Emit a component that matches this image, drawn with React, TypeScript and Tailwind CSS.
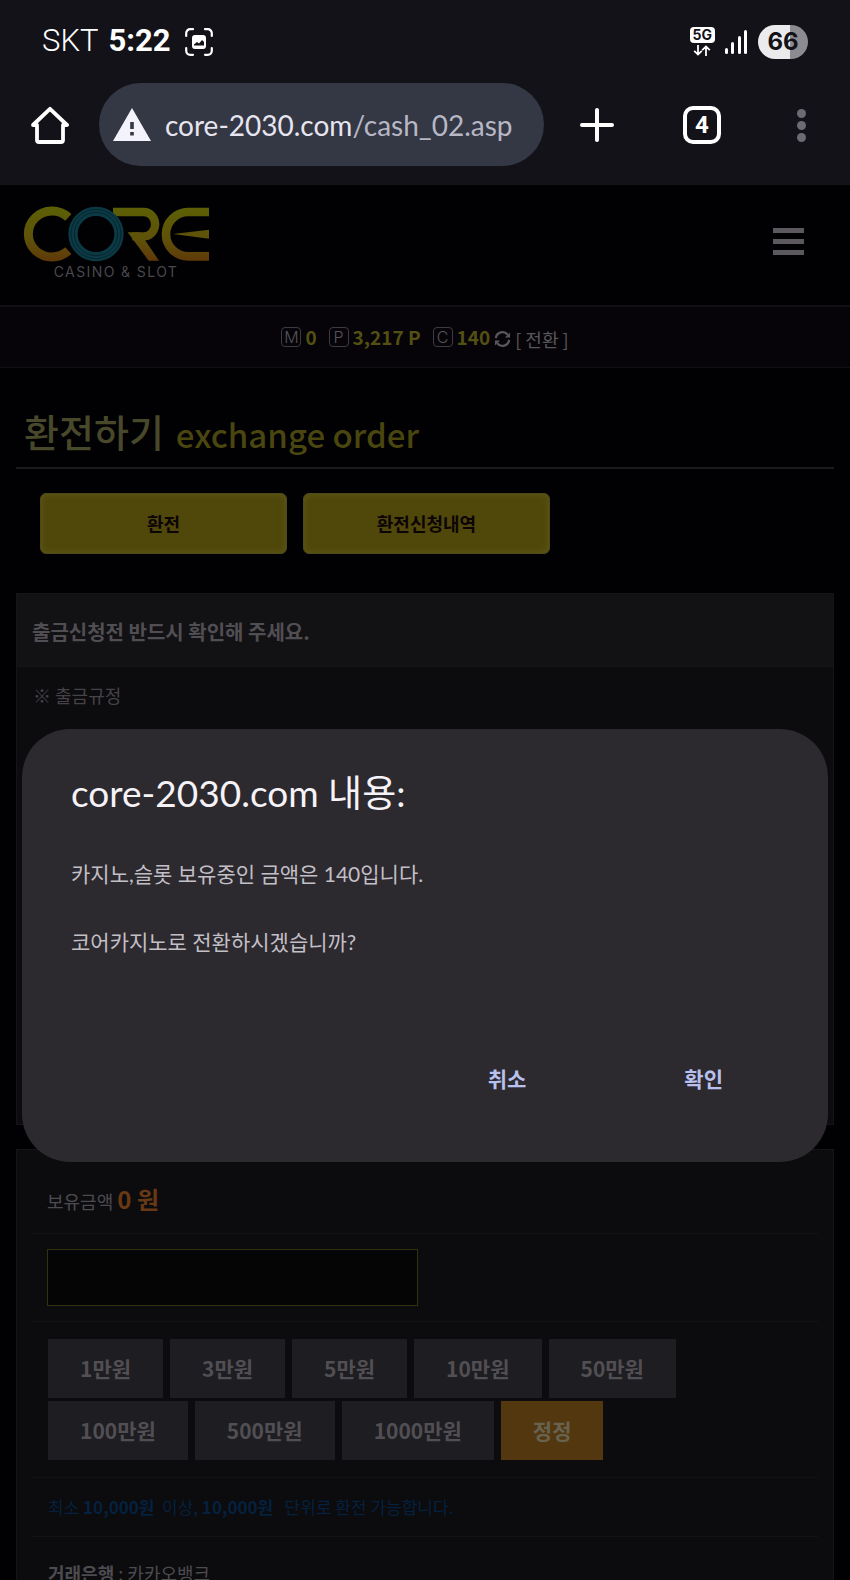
import type { ReactNode } from "react";

const amounts = [
  "1만원",
  "3만원",
  "5만원",
  "10만원",
  "50만원",
  "100만원",
  "500만원",
  "1000만원",
];

function CaptureIcon() {
  return (
    <svg width="28" height="28" viewBox="0 0 28 28" fill="none" aria-hidden="true">
      <path
        d="M1.2 8V5.2a4 4 0 0 1 4-4H8M20 1.2h2.8a4 4 0 0 1 4 4V8M26.8 20v2.8a4 4 0 0 1-4 4H20M8 26.8H5.2a4 4 0 0 1-4-4V20"
        stroke="#fff"
        strokeWidth="2.2"
        strokeLinecap="round"
      />
      <rect x="7" y="7" width="14" height="14" rx="3" fill="#fff" />
      <path d="M9 16.500l3-2.500 2 1.500 3-3.500 2 2v3.500H9z" fill="#131218" />
    </svg>
  );
}

function SignalIcon() {
  return (
    <svg width="23" height="24" viewBox="0 0 23 24" fill="#fff" aria-hidden="true">
      <rect x="0" y="18" width="3" height="6" rx="1.5" />
      <rect x="6" y="12" width="3" height="12" rx="1.5" />
      <rect x="13" y="6" width="3" height="18" rx="1.5" />
      <rect x="19" y="0" width="3" height="24" rx="1.5" />
    </svg>
  );
}

function DataArrowsIcon() {
  return (
    <svg width="18" height="11" viewBox="0 0 18 11" fill="none" stroke="#fff" strokeWidth="1.8" aria-hidden="true">
      <path d="M5 0v9M1.2 5.8L5 9.6l3.8-3.8M13 11V2M9.2 5.2L13 1.4l3.8 3.8" />
    </svg>
  );
}

function HomeIcon() {
  return (
    <svg width="38" height="38" viewBox="0 0 38 38" fill="none" aria-hidden="true">
      <path
        d="M2 19L19 2.8 36 19h-4v15a2 2 0 0 1-2 2H8a2 2 0 0 1-2-2V19H2z"
        stroke="#fff"
        strokeWidth="3.8"
        strokeLinejoin="round"
      />
    </svg>
  );
}

function WarningIcon() {
  return (
    <svg className="shrink-0" width="38" height="33" viewBox="0 0 38 33" aria-hidden="true">
      <path d="M19 0l19 33H0z" fill="#f4f3fb" />
      <path d="M17.2 14h3.6v7h-3.6zM17.2 24h3.6v3.6h-3.6z" fill="#343744" />
    </svg>
  );
}

function CoreLogo() {
  return (
    <svg width="186" height="56" viewBox="70 79 558 168" fill="none" role="img" aria-label="CORE">
      <defs>
        <linearGradient id="gold" gradientUnits="userSpaceOnUse" x1="0" y1="80" x2="0" y2="246">
          <stop offset="0" stopColor="#5c6005" />
          <stop offset="0.6" stopColor="#5f510a" />
          <stop offset="1" stopColor="#5f3808" />
        </linearGradient>
      </defs>
      <g stroke="url(#gold)">
        <path d="M206 113a71 69 0 1 0 0 100" strokeWidth="27" />
        <path d="M340 97H432a34 36 0 0 1 0 73H398" strokeWidth="25" />
        <path d="M628 97H566a67 66.5 0 0 0 0 133H628" strokeWidth="26" />
      </g>
      <path d="M384 158H420L478 243H447z" fill="url(#gold)" />
      <path d="M520 163L628 150V177z" fill="url(#gold)" />
      <ellipse cx="289" cy="163" rx="69" ry="68" stroke="#0b3a45" strokeWidth="28" />
      <ellipse cx="289" cy="163" rx="75" ry="74" stroke="#062530" strokeWidth="3" />
      <ellipse cx="289" cy="163" rx="65" ry="65" stroke="#062530" strokeWidth="3" />
    </svg>
  );
}

function RefreshIcon() {
  return (
    <svg width="17" height="18" viewBox="0 0 18 18" fill="none" aria-hidden="true">
      <path d="M2 8a7 7 0 0 1 12.5-3.5M16 10a7 7 0 0 1-12.5 3.5" stroke="#59575b" strokeWidth="2.4" />
      <path d="M17 2v5.5h-5.5zM1 16v-5.500h5.500z" fill="#59575b" />
    </svg>
  );
}

function Balance({ mark, children }: { mark: string; children: ReactNode }) {
  return (
    <span className="flex items-center gap-1">
      <span className="flex h-5 w-5 items-center justify-center rounded-sm border border-[#3d3b40] font-['Inter'] text-base leading-none font-light text-[#56545a]">
        {mark}
      </span>
      <b className="text-[19px] leading-7 font-bold text-[#545013]">{children}</b>
    </span>
  );
}

function StatusBar() {
  return (
    <div className="flex h-[83px] items-center justify-between px-[42px] font-['Roboto'] text-white">
      <div className="flex items-center gap-2.5 text-[31px]">
        <span className="font-light">SKT</span>
        <b className="font-bold">5:22</b>
        <span className="pl-1">
          <CaptureIcon />
        </span>
      </div>
      <div className="flex items-center gap-2.5">
        <div className="flex flex-col items-center gap-0.5">
          <span className="rounded-sm bg-white px-[3px] font-['Inter'] text-sm leading-4 font-bold text-[#131218]">
            5G
          </span>
          <DataArrowsIcon />
        </div>
        <SignalIcon />
        <div className="flex h-[34px] w-[50px] items-center justify-center rounded-full bg-linear-to-r from-[#ebebed] from-65% to-[#8c8b8f] to-65% font-['Inter'] text-2xl font-bold text-[#131218]">
          66
        </div>
      </div>
    </div>
  );
}

function BrowserBar() {
  return (
    <div className="flex h-[102px] items-start pr-11 pl-[31px]">
      <button aria-label="홈" className="flex h-[84px] items-center">
        <HomeIcon />
      </button>
      <a
        href="#address"
        className="ml-[30px] flex h-[83px] w-[445px] items-center gap-3.5 rounded-full bg-[#343744] px-3.5 text-[28px] whitespace-nowrap text-[#e6e5f0]"
      >
        <WarningIcon />
        <span>
          core-2030.com<span className="text-[#b7b7c6]">/cash_02.asp</span>
        </span>
      </a>
      <div className="flex h-[84px] flex-1 items-center pl-9">
        <button aria-label="새 탭">
          <svg width="34" height="34" viewBox="0 0 34 34" stroke="#fff" strokeWidth="4" strokeLinecap="round">
            <path d="M17 2v30M2 17h30" />
          </svg>
        </button>
        <button
          aria-label="탭 4개"
          className="ml-[69px] flex h-[38px] w-[38px] items-center justify-center rounded-[10px] border-4 border-white font-['Roboto'] text-2xl leading-none font-bold text-white"
        >
          4
        </button>
        <button aria-label="메뉴" className="ml-auto flex flex-col gap-[3px]">
          <i className="h-[9px] w-[9px] rounded-full bg-[#6c6a72]" />
          <i className="h-[9px] w-[9px] rounded-full bg-[#6c6a72]" />
          <i className="h-[9px] w-[9px] rounded-full bg-[#6c6a72]" />
        </button>
      </div>
    </div>
  );
}

function ExchangePage() {
  return (
    <div className="bg-[#010003] font-['Noto_Sans_CJK_KR',sans-serif]">
      <header className="flex h-[122px] items-center justify-between border-b-2 border-[#100f13] pr-[46px] pl-[23px]">
        <a href="#home" className="flex flex-col items-center pb-1">
          <CoreLogo />
          <span className="pt-0.5 font-['Inter'] text-sm leading-4 tracking-widest text-[#4a484c]">
            CASINO &amp; SLOT
          </span>
        </a>
        <button aria-label="전체 메뉴" className="flex flex-col gap-1.5 pb-2">
          <i className="h-[5px] w-[31px] bg-[#5b595e]" />
          <i className="h-[5px] w-[31px] bg-[#5b595e]" />
          <i className="h-[5px] w-[31px] bg-[#5b595e]" />
        </button>
      </header>

      <div className="flex h-[61px] items-center justify-center gap-3 border-b border-[#100e12] bg-[#060408]">
        <Balance mark="M">0</Balance>
        <Balance mark="P">3,217 P</Balance>
        <div className="flex items-center gap-1">
          <Balance mark="C">140</Balance>
          <button className="flex items-center gap-1 pt-1 text-lg leading-6 text-[#59575b]">
            <RefreshIcon />[ 전환 ]
          </button>
        </div>
      </div>

      <main className="px-4">
        <h1 className="flex h-[101px] items-end gap-3 border-b-2 border-[#1a191c] px-2 pb-2 text-[38px] leading-[56px] font-medium text-[#48482b]">
          환전하기
          <small className="text-[33px] leading-[50px] font-medium text-[#4a460f]">
            exchange order
          </small>
        </h1>

        <div className="flex gap-4 px-6 pt-6 pb-[39px]">
          <button className="h-[61px] w-[247px] rounded-md border border-[#4d4a1c] bg-[#50480a] pb-0.5 text-lg font-bold text-[#0d0406] shadow-[inset_0_0_6px_#5f5a1c]">
            환전
          </button>
          <button className="h-[61px] w-[247px] rounded-md border border-[#4d4a1c] bg-[#50480a] pb-0.5 text-lg font-bold text-[#0d0406] shadow-[inset_0_0_6px_#5f5a1c]">
            환전신청내역
          </button>
        </div>

        <section className="h-[532px] border border-[#151417] bg-[#0c0b0e]">
          <h2 className="border-b border-[#171519] bg-[#121114] px-[15px] pt-6 pb-5 text-xl leading-7 font-bold text-[#514e53]">
            출금신청전 반드시 확인해 주세요.
          </h2>
          <p className="px-4 py-3.5 text-lg leading-7 text-[#454348]">※ 출금규정</p>
        </section>

        <section className="mt-6 border border-[#151417] bg-[#0c0b0e] px-[15px] text-lg">
          <div className="border-b border-[#131216] px-[15px] pt-[31px] pb-3.5 leading-9 text-[#4d4b50]">
            보유금액 <b className="text-2xl leading-9 text-[#693915]">0 원</b>
          </div>
          <div className="border-b border-[#131216] px-[15px] py-[15px]">
            <input
              aria-label="환전금액"
              className="block h-[57px] w-[371px] border border-[#33320f] bg-[#050505] px-3 text-[#514e53]"
            />
          </div>
          <div className="border-b border-[#131216] px-4 py-[17px]">
            <div className="flex max-w-[640px] flex-wrap gap-x-[7px] gap-y-[3px]">
              {amounts.map((amount) => (
                <button
                  key={amount}
                  className="h-[59px] bg-[#1e1d21] px-8 text-[21px] font-bold text-[#514f54]"
                >
                  {amount}
                </button>
              ))}
              <button className="h-[59px] bg-[#53380f] px-8 text-[21px] font-bold text-[#686250]">
                정정
              </button>
            </div>
          </div>
          <p className="border-b border-[#131216] px-4 py-4 text-[17px] leading-[26px] whitespace-pre text-[#04213f]">
            최소 <b>10,000원</b>
            {"  이상, "}
            <b>10,000원</b>
            {"   단위로 환전 가능합니다."}
          </p>
          <p className="px-4 pt-[22px] pb-4 leading-7 text-[#4d4b50]">
            <b>거래은행</b> : 카카오뱅크
          </p>
        </section>
      </main>
    </div>
  );
}

function ConfirmDialog() {
  return (
    <div className="absolute inset-0 flex items-start px-[22px] pt-[544px]">
      <div
        role="alertdialog"
        aria-labelledby="dialog-title"
        className="w-full rounded-[48px] bg-[#2c292f] px-[49px] pt-9 pb-14"
      >
        <h2 id="dialog-title" className="text-[37px] leading-[56px] text-[#f5f3f8]">
          core-2030.com 내용:
        </h2>
        <p className="pt-9 text-[21px] leading-[34px] text-[#c2bfc6]">
          카지노,슬롯 보유중인 금액은 140입니다.
          <br />
          <br />
          코어카지노로 전환하시겠습니까?
        </p>
        <div className="flex justify-end gap-[110px] pt-[93px] pr-8 text-[21px] font-bold text-[#b8c0ee]">
          <button className="h-[54px] px-6">취소</button>
          <button className="h-[54px] px-6">확인</button>
        </div>
      </div>
    </div>
  );
}

export default function App() {
  return (
    <div className="flex h-screen flex-col overflow-hidden bg-[#131218] font-['Lato','Noto_Sans_CJK_KR',sans-serif]">
      <StatusBar />
      <BrowserBar />
      <div className="relative flex-1 overflow-hidden">
        <ExchangePage />
        <ConfirmDialog />
      </div>
    </div>
  );
}
